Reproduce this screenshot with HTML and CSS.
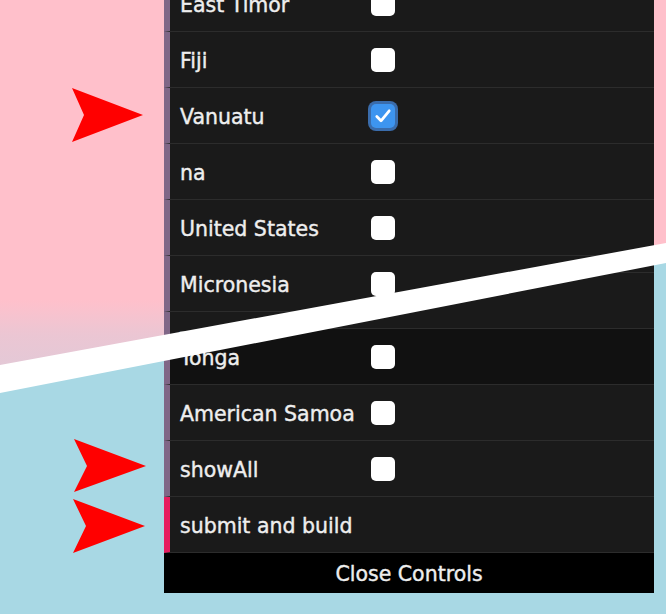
FILE: index.html
```html
<!DOCTYPE html>
<html>
<head>
<meta charset="utf-8">
<link rel="stylesheet" href="styles.css">
</head>
<body>
<div class="stage">
  <div class="layer layer-top">
    <ul class="gui gui-top">
      <li class="row bool"><span class="name">East Timor</span><span class="box"></span></li>
      <li class="row bool"><span class="name">Fiji</span><span class="box"></span></li>
      <li class="row bool"><span class="name">Vanuatu</span><span class="box checked"><svg viewBox="0 0 24 24"><path d="M5.8 12.6 L10 16.8 L18.2 6.8"/></svg></span></li>
      <li class="row bool"><span class="name">na</span><span class="box"></span></li>
      <li class="row bool"><span class="name">United States</span><span class="box"></span></li>
      <li class="row bool"><span class="name">Micronesia</span><span class="box"></span></li>
      <li class="row bool"><span class="name">Tonga</span><span class="box"></span></li>
    </ul>
  </div>
  <div class="layer layer-bottom">
    <ul class="gui gui-bottom">
      <li class="row bool"><span class="name">East Timor</span><span class="box"></span></li>
      <li class="row bool"><span class="name">Fiji</span><span class="box"></span></li>
      <li class="row bool"><span class="name">Vanuatu</span><span class="box"></span></li>
      <li class="row bool"><span class="name">na</span><span class="box"></span></li>
      <li class="row bool"><span class="name">United States</span><span class="box"></span></li>
      <li class="row bool"><span class="name">Micronesia</span><span class="box"></span></li>
      <li class="row bool hover"><span class="name">Tonga</span><span class="box"></span></li>
      <li class="row bool"><span class="name">American Samoa</span><span class="box"></span></li>
      <li class="row bool"><span class="name">showAll</span><span class="box"></span></li>
      <li class="row func"><span class="name">submit and build</span></li>
      <li class="close">Close Controls</li>
    </ul>
  </div>
  <svg class="overlay" viewBox="0 0 666 614" width="666" height="614">
    <polygon class="stripe" points="0,365 666,243 666,263 0,393"/>
    <polygon class="arrow" points="72,88 143,115 72,142 84,115"/>
    <polygon class="arrow" points="74,439 146,466 74,492 87,466"/>
    <polygon class="arrow" points="73,499 145,526 73,553 86,526"/>
  </svg>
</div>
</body>
</html>
```
FILE: styles.css
```css
html, body {
  margin: 0;
  padding: 0;
}
body {
  width: 666px;
  height: 614px;
  overflow: hidden;
  font-family: "DejaVu Sans", "Liberation Sans", sans-serif;
}
.stage {
  position: relative;
  width: 666px;
  height: 614px;
  overflow: hidden;
}
.layer {
  position: absolute;
  left: 0;
  top: 0;
  width: 666px;
  height: 614px;
  overflow: hidden;
}
.layer-top {
  background: linear-gradient(to bottom, #ffc0cb 0, #ffc0cb 300px, #f6c3cf 316px, #ebc6d3 335px, #e2c9d7 372px);
}
.layer-bottom {
  background: #a8d8e4;
  clip-path: polygon(0 370px, 666px 248px, 666px 614px, 0 614px);
}
.gui {
  list-style: none;
  margin: 0;
  padding: 0;
  width: 490px;
  background: #1a1a1a;
  color: #eeeeee;
  font-size: 20.5px;
  -webkit-text-stroke: 0.4px #eeeeee;
}
.gui-top {
  margin: -24px 0 0 164px;
}
.gui-bottom {
  margin: -7px 0 0 164px;
}
.row {
  display: flex;
  align-items: center;
  height: 55px;
  border-bottom: 1px solid #2c2c2c;
  padding-left: 10px;
}
.bool {
  border-left: 6px solid #806787;
}
.func {
  border-left: 6px solid #e61d5f;
}
.hover {
  background: #111111;
}
.name {
  width: 191px;
  flex: none;
  white-space: nowrap;
  line-height: 51px;
  padding-top: 4px;
}
.box {
  width: 24px;
  height: 24px;
  border-radius: 5px;
  background: #ffffff;
  flex: none;
  display: flex;
}
.box.checked {
  background: #3d95f0;
  box-shadow: 0 0 0 3px #3a6cab;
}
.box svg {
  width: 24px;
  height: 24px;
}
.box svg path {
  fill: none;
  stroke: #ffffff;
  stroke-width: 2.8;
  stroke-linecap: round;
  stroke-linejoin: round;
}
.close {
  height: 38px;
  line-height: 38px;
  padding-top: 2px;
  background: #000000;
  text-align: center;
}
.overlay {
  position: absolute;
  left: 0;
  top: 0;
  pointer-events: none;
}
.stripe {
  fill: #ffffff;
}
.arrow {
  fill: #ff0000;
}
```
